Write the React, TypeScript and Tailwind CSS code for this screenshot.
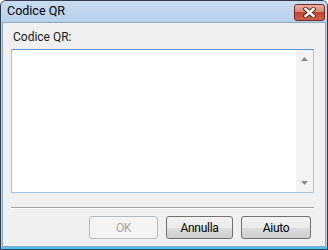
import { useState } from "react";

const FONT = { fontFamily: "Roboto, 'Noto Sans', sans-serif" };

function CloseButton() {
  return (
    <button
      type="button"
      aria-label="Chiudi"
      className="relative mt-[2px] flex h-[17px] w-[31px] items-center justify-center overflow-hidden rounded-[3px] border border-[#6e2a22] bg-[linear-gradient(#eab0a2,#d98a77_45%,#c4432e_50%,#d0604a)]"
    >
      <svg width="13" height="11" viewBox="0 0 13 11">
        <path d="M2.5 2 L10.5 9 M10.5 2 L2.5 9" stroke="#6b2a22" strokeWidth="4.5" strokeLinecap="square" />
        <path d="M2.5 2 L10.5 9 M10.5 2 L2.5 9" stroke="#ffffff" strokeWidth="2.4" strokeLinecap="square" />
      </svg>
    </button>
  );
}

function DialogButton({ label, width, disabled }: { label: string; width: string; disabled?: boolean }) {
  return (
    <button
      type="button"
      disabled={disabled}
      className={`flex h-[23px] items-center justify-center rounded-[3px] border text-[12px] tracking-[-0.3px] ${width} ${
        disabled
          ? "border-[#b5b9bc] bg-[#f4f4f4] text-[#a3a3a3]"
          : "border-[#707070] bg-[linear-gradient(#f2f2f2,#ebebeb_50%,#dddddd_50%,#cfcfcf)] text-black"
      }`}
    >
      {label}
    </button>
  );
}

export default function App() {
  const [value, setValue] = useState("");

  return (
    <div
      className="flex h-[250px] w-[328px] flex-col overflow-hidden rounded-t-[6px] border border-[#2d3c4e] bg-[#bcd3ea]"
      style={FONT}
    >
      <div className="flex h-[21px] items-center justify-between bg-[linear-gradient(#c9dcf0,#b8d0ea)] pl-[6px] pr-[2px]">
        <span className="text-[12.5px] text-black">Codice QR</span>
        <CloseButton />
      </div>
      <div className="mx-[1px] flex flex-1 flex-col border border-[#8fa6bf] bg-[#f0f0f0] pl-[8px] pr-[11px]">
        <div className="mt-[7px] h-[15px] pl-[2px] text-[12px] leading-[15px] text-[#1a1a1a]">Codice QR:</div>
        <div className="mt-[4px] flex h-[144px] border border-[#a4c6e6] border-t-[#5f98cf] bg-white">
          <textarea
            value={value}
            onChange={(e) => setValue(e.target.value)}
            className="flex-1 resize-none bg-transparent outline-none"
          />
          <div className="flex w-[17px] flex-col items-center justify-between bg-[#f3f3f3] py-[7px]">
            <svg width="7" height="4" viewBox="0 0 7 4">
              <path d="M0 4 L3.5 0 L7 4 Z" fill="#8a8a8a" />
            </svg>
            <svg width="7" height="4" viewBox="0 0 7 4">
              <path d="M0 0 L7 0 L3.5 4 Z" fill="#8a8a8a" />
            </svg>
          </div>
        </div>
        <div className="mt-[14px] h-[2px] border-t border-[#a0a0a0] border-b-white border-b" />
        <div className="mt-[7px] flex justify-end gap-[8px] pr-[3px]">
          <DialogButton label="OK" width="w-[69px]" disabled />
          <DialogButton label="Annulla" width="w-[67px]" />
          <DialogButton label="Aiuto" width="w-[70px]" />
        </div>
      </div>
      <div className="h-[2px] bg-[#48c1ed]" />
    </div>
  );
}
